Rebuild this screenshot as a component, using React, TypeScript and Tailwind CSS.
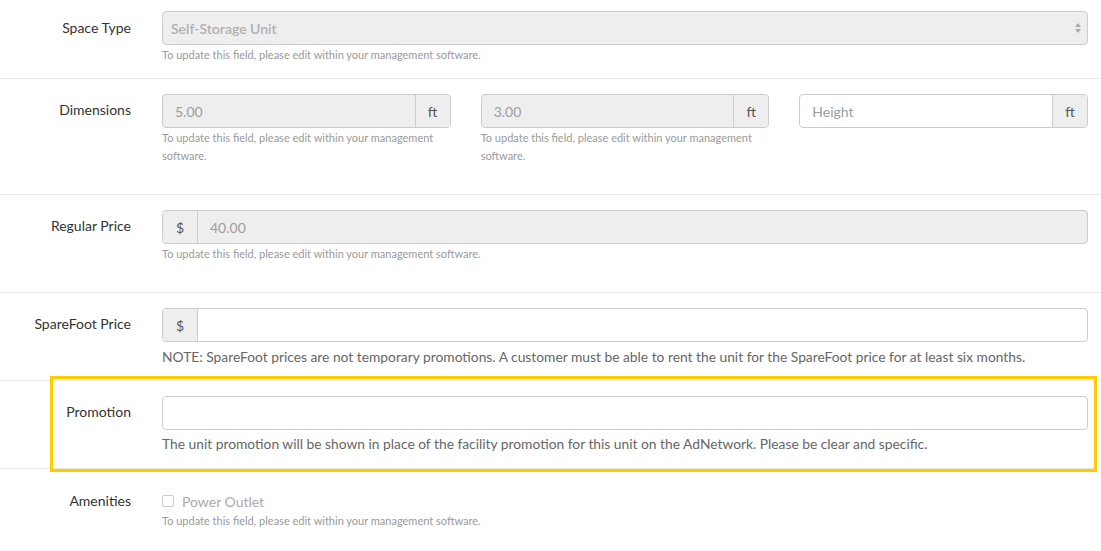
import type { ReactNode } from "react";

const HELP = "To update this field, please edit within your management software.";

function Row({
  label,
  children,
  className = "",
  labelClass = "pt-[8px]",
}: {
  label: string;
  children: ReactNode;
  className?: string;
  labelClass?: string;
}) {
  return (
    <div className={`flex ${className}`}>
      <div className={`w-[131px] shrink-0 text-right text-[14px] leading-[20px] text-[#333] ${labelClass}`}>
        {label}
      </div>
      <div className="ml-[31px] mr-[13px] flex-1 min-w-0">{children}</div>
    </div>
  );
}

function Help({ children }: { children: ReactNode }) {
  return <p className="mt-[1px] text-[11px] leading-[18px] text-[#9a9a9a]">{children}</p>;
}

function Addon({ children, side }: { children: ReactNode; side: "left" | "right" }) {
  return (
    <div
      className={`flex h-full w-[35px] shrink-0 items-center justify-center bg-[#eeeeee] text-[14px] text-[#555] ${
        side === "left" ? "border-r border-[#ccc]" : "border-l border-[#ccc]"
      }`}
    >
      {children}
    </div>
  );
}

function FtInput({ value, placeholder }: { value?: string; placeholder?: string }) {
  const disabled = value !== undefined;
  return (
    <div
      className={`flex h-[34px] items-center overflow-hidden rounded-[4px] border border-[#ccc] ${
        disabled ? "bg-[#eeeeee]" : "bg-white"
      }`}
    >
      <div className="flex-1 px-[12px] text-[14px] text-[#9d9d9d]">{value ?? placeholder}</div>
      <Addon side="right">ft</Addon>
    </div>
  );
}

export default function App() {
  return (
    <div className="w-[1101px] h-[551px] overflow-hidden bg-white font-['Lato','Open_Sans',sans-serif]">
      {/* Space type */}
      <Row label="Space Type" className="pt-[11px] pb-[14px] border-b border-[#e8e8e8]" labelClass="pt-[7px]">
        <div className="relative flex h-[34px] items-center rounded-[4px] border border-[#ccc] bg-[#eeeeee] px-[8px]">
          <span className="text-[14px] font-semibold text-[#b0b0b0]">Self-Storage Unit</span>
          <div className="absolute right-[6px] top-1/2 flex -translate-y-1/2 flex-col gap-[2px]">
            <div className="h-0 w-0 border-x-[3px] border-b-[4px] border-x-transparent border-b-[#aaa]" />
            <div className="h-0 w-0 border-x-[3px] border-t-[4px] border-x-transparent border-t-[#aaa]" />
          </div>
        </div>
        <Help>{HELP}</Help>
      </Row>

      {/* Dimensions */}
      <Row label="Dimensions" className="pt-[15px] pb-[29px] border-b border-[#e8e8e8]" labelClass="pt-[6px]">
        <div className="grid grid-cols-3 gap-x-[30px]">
          <div>
            <FtInput value="5.00" />
            <Help>{HELP}</Help>
          </div>
          <div>
            <FtInput value="3.00" />
            <Help>{HELP}</Help>
          </div>
          <div>
            <FtInput placeholder="Height" />
          </div>
        </div>
      </Row>

      {/* Regular price */}
      <Row label="Regular Price" className="pt-[15px] pb-[29px] border-b border-[#e8e8e8]" labelClass="pt-[6px]">
        <div className="flex h-[34px] items-center overflow-hidden rounded-[4px] border border-[#ccc] bg-[#eeeeee]">
          <Addon side="left">$</Addon>
          <div className="flex-1 px-[12px] text-[14px] text-[#9d9d9d]">40.00</div>
        </div>
        <Help>{HELP}</Help>
      </Row>

      {/* SpareFoot price */}
      <Row label="SpareFoot Price" className="pt-[15px] pb-[13px] border-b border-[#e8e8e8]" labelClass="pt-[6px]">
        <div className="flex h-[34px] items-center overflow-hidden rounded-[4px] border border-[#ccc] bg-white">
          <Addon side="left">$</Addon>
          <div className="flex-1" />
        </div>
        <p className="mt-[5px] text-[13.8px] leading-[20px] text-[#666]">
          NOTE: SpareFoot prices are not temporary promotions. A customer must be able to rent the unit for the
          SpareFoot price for at least six months.
        </p>
      </Row>

      {/* Promotion (highlighted) */}
      <div className="relative">
        <Row label="Promotion" className="pt-[15px] pb-[14px] border-b border-[#e8e8e8]" labelClass="pt-[6px]">
          <div className="h-[34px] rounded-[4px] border border-[#ccc] bg-white" />
          <p className="mt-[4px] text-[13.8px] leading-[20px] text-[#666]">
            The unit promotion will be shown in place of the facility promotion for this unit on the AdNetwork. Please
            be clear and specific.
          </p>
        </Row>
        <div className="pointer-events-none absolute left-[50px] right-[4px] top-[-5px] bottom-[-3px] border-[3px] border-[#ffcc00]" />
      </div>

      {/* Amenities */}
      <Row label="Amenities" className="pt-[22px]" labelClass="pt-0">
        <div className="flex items-center gap-[8px] h-[20px]">
          <div className="h-[12px] w-[12px] rounded-[2px] border border-[#ccc] bg-white" />
          <span className="text-[14px] text-[#aaa]">Power Outlet</span>
        </div>
        <Help>{HELP}</Help>
      </Row>
    </div>
  );
}
